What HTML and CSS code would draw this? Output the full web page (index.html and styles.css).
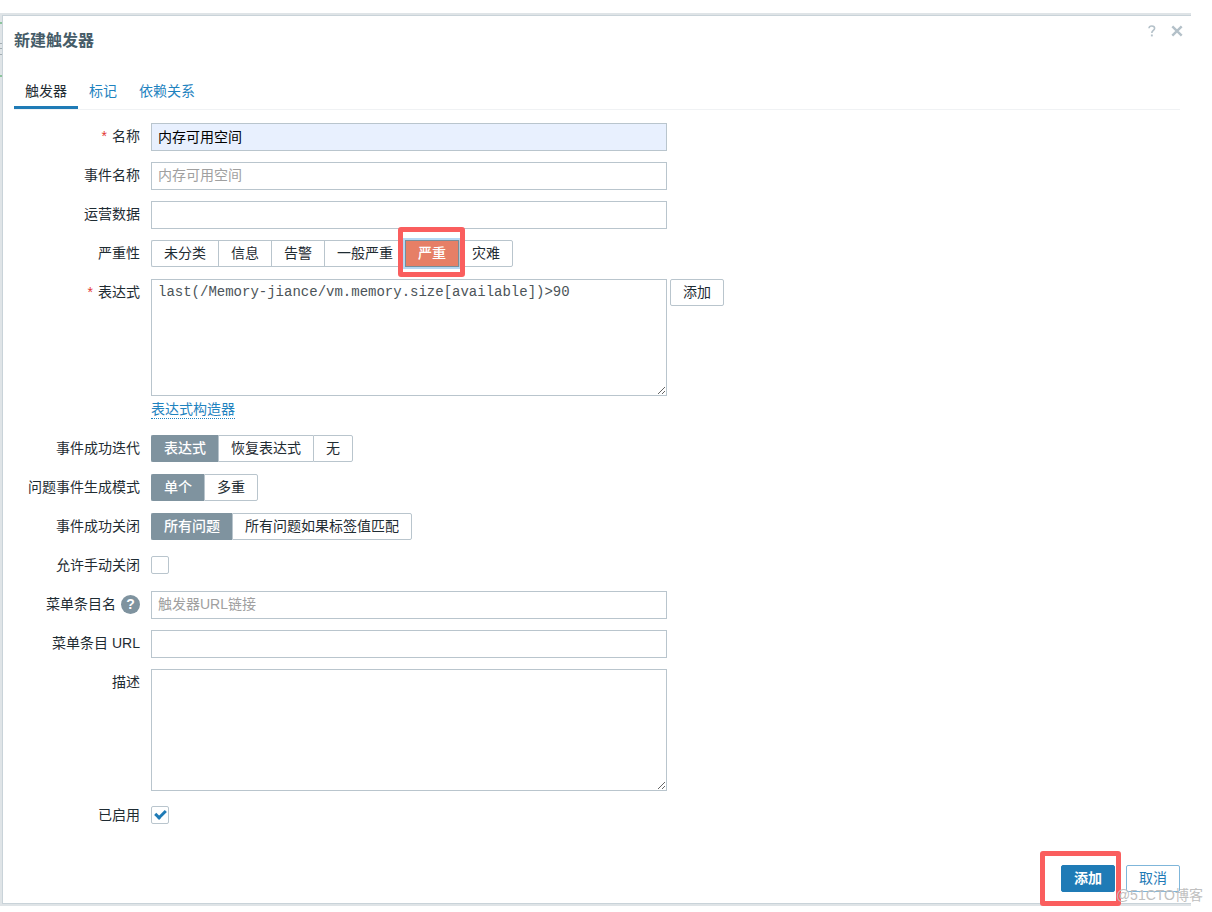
FILE: index.html
```html
<!DOCTYPE html>
<html lang="zh-CN">
<head>
    <meta charset="UTF-8">
    <meta name="viewport" content="width=device-width, initial-scale=1.0">
    <title>新建触发器</title>
    <link rel="stylesheet" href="styles.css">
</head>
<body>

    <div class="backdrop">
        <main class="dialog">
            <header class="dialog-header">
                <h1>新建触发器</h1>
                <div class="dialog-tools">
                    <button type="button" class="icon-btn" aria-label="帮助">
                        <svg width="8" height="12" viewBox="0 0 8 12"><path d="M1 3.2C1.1 1.7 2.3 1 3.8 1c1.600 0 2.800.8 2.800 2.300C6.600 5.500 3.800 5.300 3.800 8" fill="none" stroke="currentColor" stroke-width="1.600"/><rect x="2.900" y="9.500" width="1.900" height="1.900" fill="currentColor"/></svg>
                    </button>
                    <button type="button" class="icon-btn" aria-label="关闭">
                        <svg width="12" height="12" viewBox="0 0 12 12"><path d="M1.300 1.300l9.400 9.400M10.700 1.300l-9.400 9.400" fill="none" stroke="currentColor" stroke-width="2.400"/></svg>
                    </button>
                </div>
            </header>

            <nav class="tabs">
                <a href="#trigger" class="active">触发器</a>
                <a href="#tags">标记</a>
                <a href="#deps">依赖关系</a>
            </nav>

            <form class="form" id="trigger">
                <label class="form-label required" for="name">名称</label>
                <div class="form-field"><input type="text" class="text autofill" id="name" value="内存可用空间"></div>

                <label class="form-label" for="event-name">事件名称</label>
                <div class="form-field"><input type="text" class="text" id="event-name" placeholder="内存可用空间"></div>

                <label class="form-label" for="opdata">运营数据</label>
                <div class="form-field"><input type="text" class="text" id="opdata"></div>

                <span class="form-label" id="severity-label">严重性</span>
                <div class="form-field">
                    <div class="segments" role="radiogroup" aria-labelledby="severity-label">
                        <label><input type="radio" name="severity"><span>未分类</span></label>
                        <label><input type="radio" name="severity"><span>信息</span></label>
                        <label><input type="radio" name="severity"><span>告警</span></label>
                        <label><input type="radio" name="severity"><span>一般严重</span></label>
                        <label class="high marked"><input type="radio" name="severity" checked><span>严重</span></label>
                        <label><input type="radio" name="severity"><span>灾难</span></label>
                    </div>
                </div>

                <label class="form-label required" for="expression">表达式</label>
                <div class="form-field expression">
                    <div class="expression-row">
                        <textarea class="code" id="expression" spellcheck="false">last(/Memory-jiance/vm.memory.size[available])&gt;90</textarea>
                        <button type="button" class="btn">添加</button>
                    </div>
                    <a href="#constructor" class="link-dotted">表达式构造器</a>
                </div>

                <span class="form-label" id="recovery-label">事件成功迭代</span>
                <div class="form-field">
                    <div class="segments" role="radiogroup" aria-labelledby="recovery-label">
                        <label><input type="radio" name="recovery" checked><span>表达式</span></label>
                        <label><input type="radio" name="recovery"><span>恢复表达式</span></label>
                        <label><input type="radio" name="recovery"><span>无</span></label>
                    </div>
                </div>

                <span class="form-label" id="mode-label">问题事件生成模式</span>
                <div class="form-field">
                    <div class="segments" role="radiogroup" aria-labelledby="mode-label">
                        <label><input type="radio" name="mode" checked><span>单个</span></label>
                        <label><input type="radio" name="mode"><span>多重</span></label>
                    </div>
                </div>

                <span class="form-label" id="close-label">事件成功关闭</span>
                <div class="form-field">
                    <div class="segments" role="radiogroup" aria-labelledby="close-label">
                        <label><input type="radio" name="close" checked><span>所有问题</span></label>
                        <label><input type="radio" name="close"><span>所有问题如果标签值匹配</span></label>
                    </div>
                </div>

                <label class="form-label" for="manual-close">允许手动关闭</label>
                <div class="form-field"><input type="checkbox" class="check" id="manual-close"></div>

                <div class="form-label">
                    <label for="url-name">菜单条目名</label>
                    <button type="button" class="hint" aria-label="提示">?</button>
                </div>
                <div class="form-field"><input type="text" class="text" id="url-name" placeholder="触发器URL链接"></div>

                <label class="form-label" for="url">菜单条目 URL</label>
                <div class="form-field"><input type="text" class="text" id="url"></div>

                <label class="form-label" for="description">描述</label>
                <div class="form-field"><textarea class="description" id="description"></textarea></div>

                <label class="form-label" for="enabled">已启用</label>
                <div class="form-field"><input type="checkbox" class="check" id="enabled" checked></div>
            </form>

            <footer class="dialog-footer">
                <span class="submit"><button type="submit" form="trigger" class="btn btn-primary">添加</button></span>
                <button type="button" class="btn btn-outline">取消</button>
            </footer>
        </main>
        <span class="watermark">@51CTO博客</span>
    </div>

</body>
</html>
```

FILE: styles.css
```css
*, *::before, *::after {
    box-sizing: border-box;
}

body {
    margin: 0;
    padding: 13px 21px 6px 0;
    background-color: #fff;
    color: #1f2c33;
    font-family: "Liberation Sans", "Noto Sans CJK SC", sans-serif;
    font-size: 14px;
    line-height: 20px;
}

input, textarea, button {
    font: inherit;
    color: inherit;
    margin: 0;
}

a {
    color: #1f83bf;
    text-decoration: none;
}

/* page behind the dialog */
.backdrop {
    position: relative;
    padding: 2px 0 2px 2px;
    background: linear-gradient(#8cc49c, #8cc49c) 0 9px / 2px 2px no-repeat,
        linear-gradient(#8cc49c, #8cc49c) 0 62px / 2px 2px no-repeat,
        linear-gradient(#a3adb2, #a3adb2) 0 30px / 2px 1px no-repeat,
        linear-gradient(#a3adb2, #a3adb2) 0 35px / 2px 1px no-repeat,
        linear-gradient(#a3adb2, #a3adb2) 0 41px / 2px 1px no-repeat,
        #dfe4e7;
}

.dialog {
    background-color: #fff;
    border: 1px solid #c9d3d9;
    border-right: 0;
    padding: 0 11px 11px 11px;
}

.dialog-header {
    display: flex;
    justify-content: space-between;
    height: 58px;
    padding-top: 8px;
}

.dialog-header h1 {
    margin: 0;
    padding-top: 6px;
    color: #465c68;
    font-size: 16px;
    line-height: 22px;
}

.dialog-tools {
    display: flex;
    align-items: flex-start;
    gap: 13px;
    margin-right: -4px;
}

.icon-btn {
    display: flex;
    padding: 1px;
    border: 0;
    background: none;
    color: #b4c1c9;
}

.tabs {
    display: flex;
    height: 36px;
    border-bottom: 1px solid #f0f2f4;
}

.tabs a {
    height: 35px;
    padding: 7px 11px 0 11px;
}

.tabs a.active {
    color: #1f2c33;
    border-bottom: 3px solid #1f7bb6;
}

.form {
    display: grid;
    grid-template-columns: 126px 1fr;
    column-gap: 11px;
    row-gap: 11px;
    padding-top: 13px;
}

.form-label {
    display: flex;
    justify-content: flex-end;
    align-items: center;
    gap: 5px;
    height: 26px;
    white-space: nowrap;
}

.required::before {
    content: "*";
    color: #e33734;
}

.form-field {
    min-height: 28px;
}

.text, textarea {
    display: block;
    width: 100%;
    max-width: 516px;
    border: 1px solid #b9c5cd;
    border-radius: 0;
    background-color: #fff;
}

.text {
    height: 28px;
    padding: 0 6px 2px 6px;
}

.text::placeholder {
    color: #a0a0a0;
}

.autofill {
    background-color: #e8f0fe;
    color: #000;
}

textarea {
    padding: 3px 6px;
    resize: both;
}

.code {
    height: 117px;
    font-family: "Liberation Mono", monospace;
    line-height: 18px;
    color: #4c5459;
    flex: 0 1 516px;
}

.description {
    height: 122px;
}

.expression {
    height: 145px;
}

.expression-row {
    display: flex;
    align-items: flex-start;
    gap: 3px;
}

.link-dotted {
    display: inline-block;
    margin-top: 4px;
    line-height: 18px;
    border-bottom: 1px dotted #1f83bf;
}

.segments {
    display: flex;
    height: 27px;
}

.segments label {
    position: relative;
    display: flex;
}

.segments input {
    position: absolute;
    opacity: 0;
}

.segments span {
    padding: 2px 12px 0 12px;
    border: 1px solid #b9c5cd;
    border-right: 0;
}

.segments label:first-child span {
    border-radius: 2px 0 0 2px;
}

.segments label:last-child span {
    border-right: 1px solid #b9c5cd;
    border-radius: 0 2px 2px 0;
}

.segments input:checked + span {
    background-color: #7f939f;
    border-color: #7f939f;
    color: #fff;
    font-weight: 500;
}

.segments .high input:checked + span {
    background-color: #e67f66;
    border: 1px solid #768d99;
    box-shadow: 0 0 0 2px #b5d8f3;
}

/* red frames round the highlighted controls */
.marked::after, .submit::after {
    content: "";
    position: absolute;
    border: 5px solid #fa5e5e;
    border-radius: 3px;
    pointer-events: none;
}

.marked::after {
    inset: -13px -6px -10px -7px;
    z-index: 1;
}

.check {
    display: block;
    appearance: none;
    width: 18px;
    height: 18px;
    margin-top: 4px;
    border: 1px solid #b9c5cd;
    border-radius: 2px;
    background-color: #fff;
}

.check:checked::before {
    content: "";
    display: block;
    width: 11px;
    height: 7px;
    margin: 3px 0 0 3px;
    border: solid #1f7bb6;
    border-width: 0 0 3px 3px;
    transform: rotate(-45deg);
}

.hint {
    width: 19px;
    height: 19px;
    padding: 0;
    border: 0;
    border-radius: 50%;
    background-color: #7f939f;
    color: #fff;
    font-weight: bold;
    line-height: 19px;
}

.btn {
    height: 27px;
    padding: 0 12px 1px 12px;
    border: 1px solid #b9c5cd;
    border-radius: 2px;
    background-color: #fff;
    white-space: nowrap;
}

.btn-primary {
    background-color: #1f7bb6;
    border-color: #1f7bb6;
    color: #fff;
    font-weight: bold;
}

.btn-outline {
    border-color: #7fb6da;
    color: #1f7bb6;
}

.dialog-footer {
    display: flex;
    justify-content: flex-end;
    gap: 11px;
    padding-top: 35px;
}

.submit {
    position: relative;
}

.submit::after {
    inset: -14px -6px -14px -21px;
}

.watermark {
    position: absolute;
    right: -12px;
    bottom: 1px;
    color: #c0c0c0;
}
```
